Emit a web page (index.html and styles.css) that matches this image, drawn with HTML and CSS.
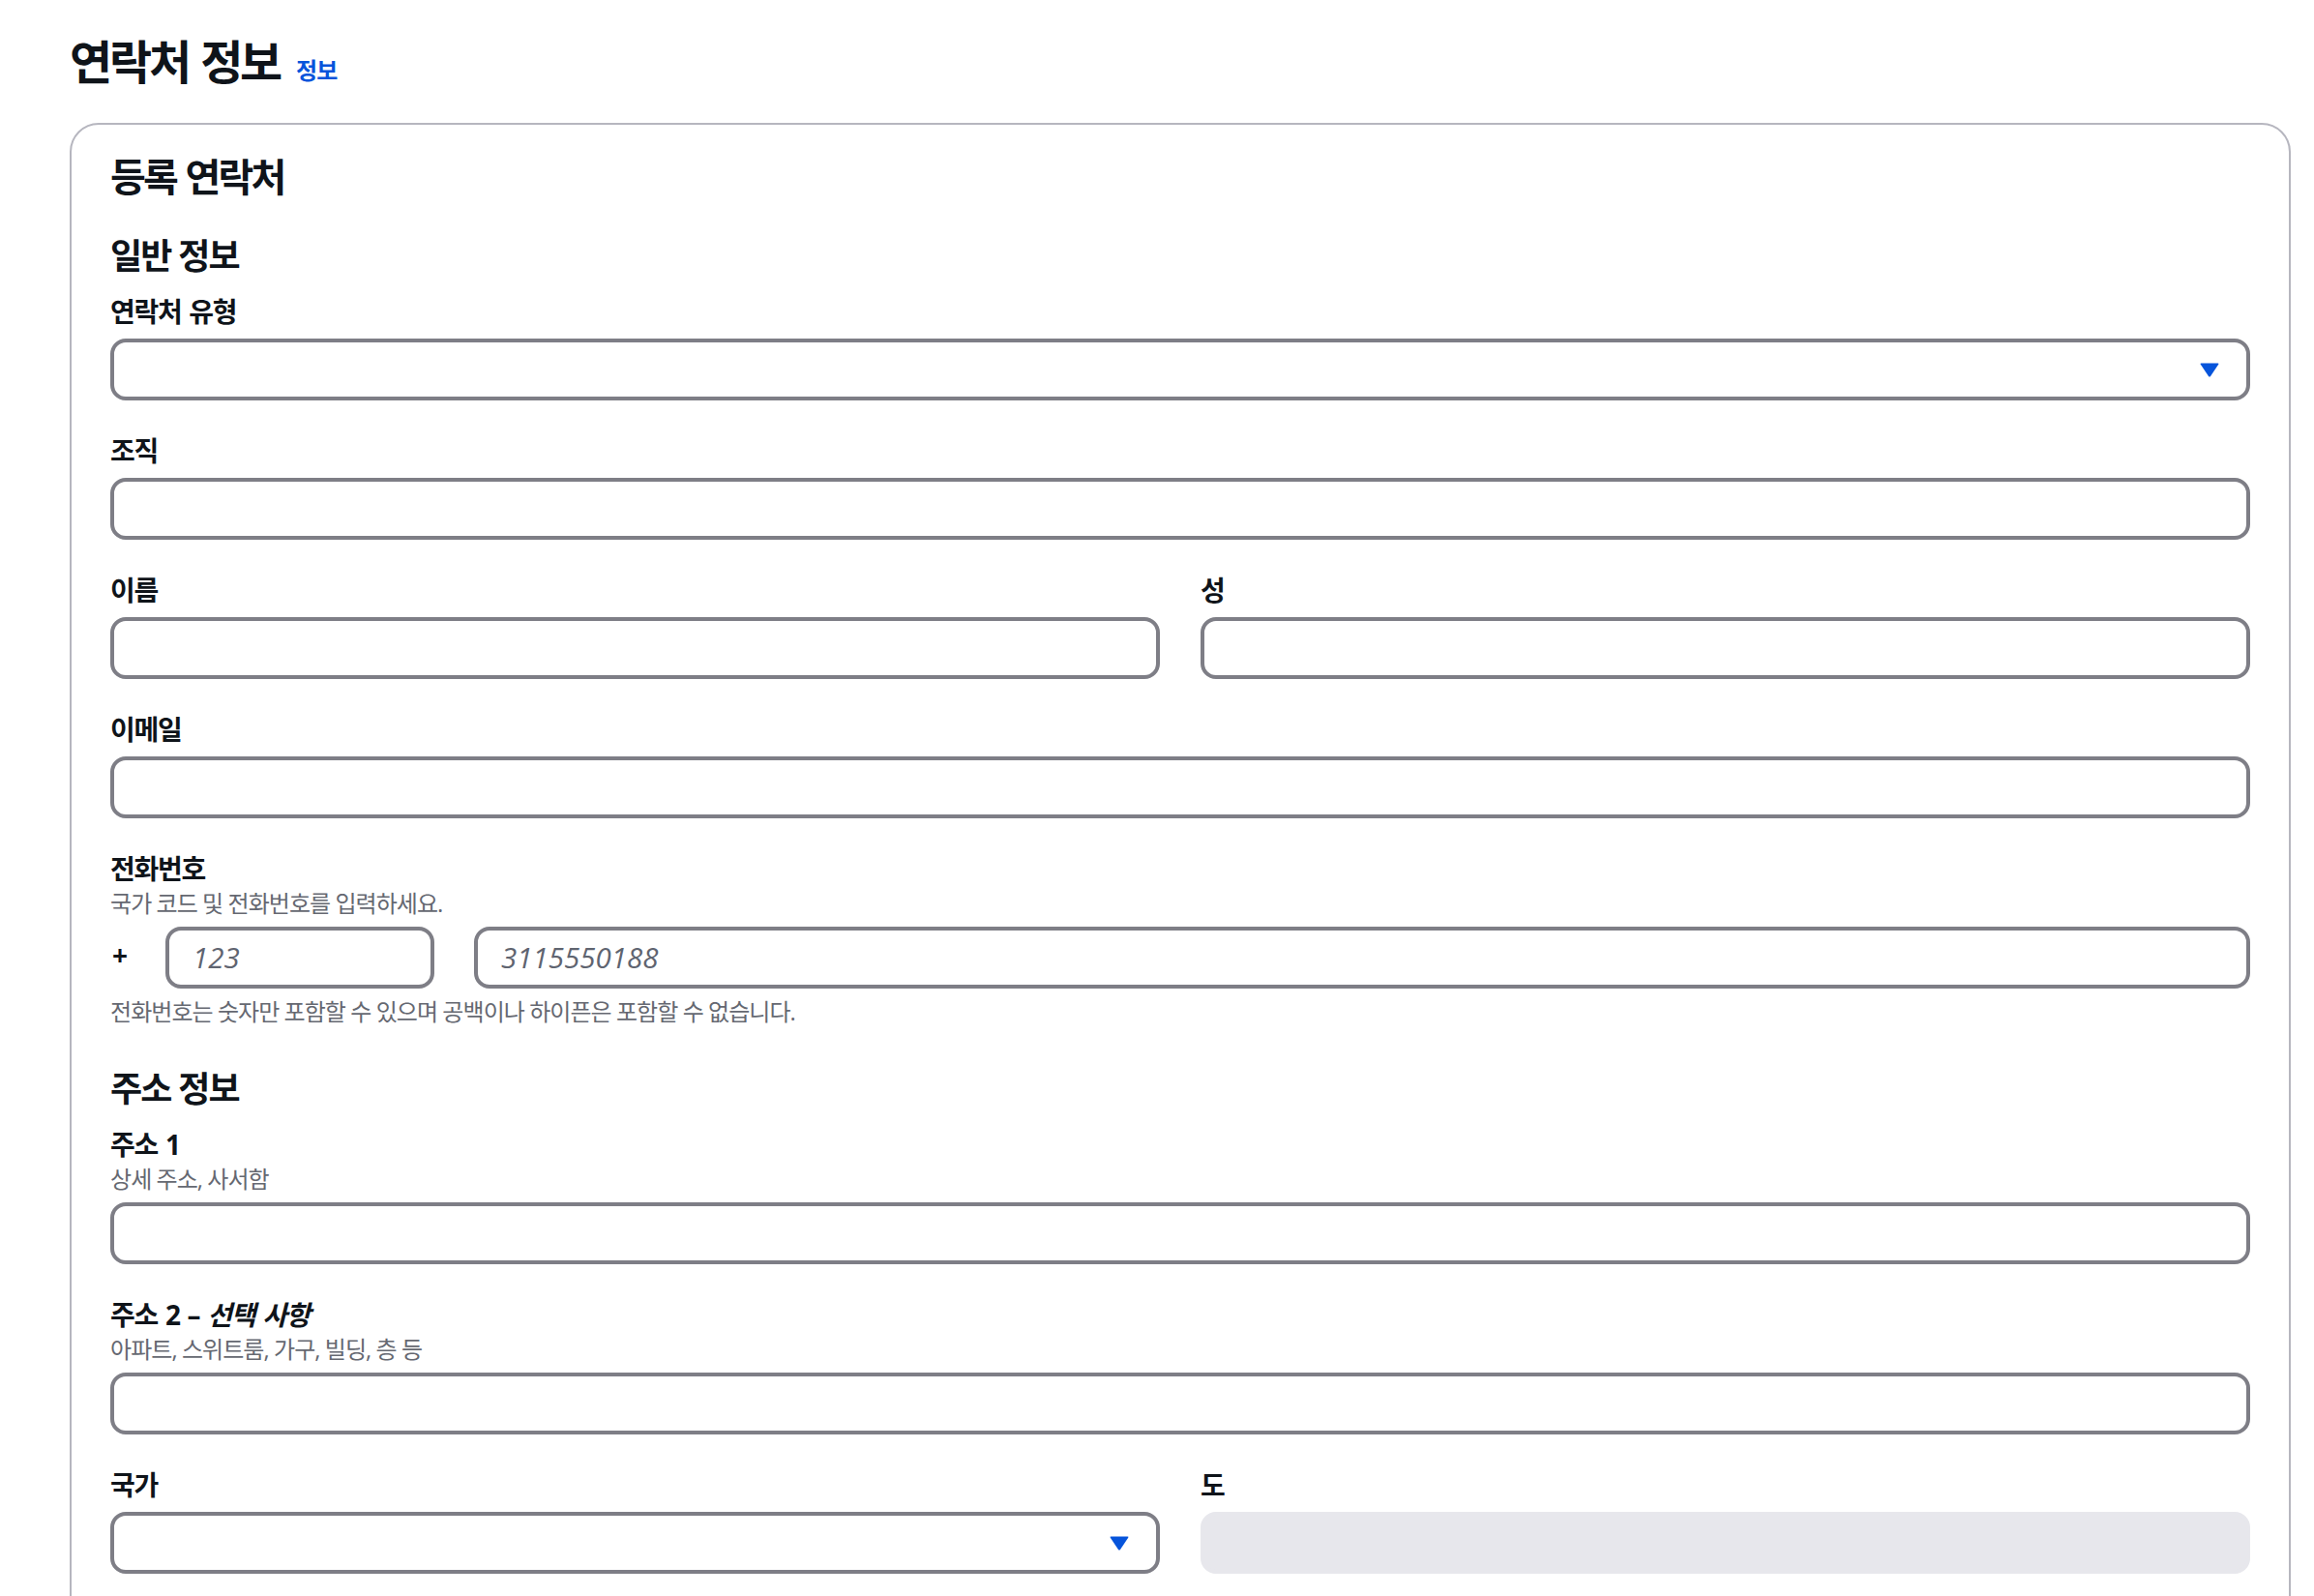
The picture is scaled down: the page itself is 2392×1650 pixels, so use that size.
FILE: index.html
```html
<!DOCTYPE html>
<html lang="ko">
<head>
<meta charset="utf-8">
<title>연락처 정보</title>
<link rel="stylesheet" href="styles.css">
</head>
<body>
<div class="page">
  <div class="page-header">
    <h1 class="page-title">연락처 정보</h1>
    <a class="info-link" href="#">정보</a>
  </div>

  <div class="card">
    <h2 class="card-title">등록 연락처</h2>

    <section class="section">
      <h3 class="section-title">일반 정보</h3>
      <div class="fields">
        <div class="field">
          <div class="label">연락처 유형</div>
          <div class="input select">
            <svg class="caret" width="20" height="15" viewBox="0 0 20 15"><path d="M1.5 0.5 H18.5 Q20 0.5 19.2 1.8 L11 14 Q10 15 9 14 L0.8 1.8 Q0 0.5 1.5 0.5 Z" fill="#0654db"/></svg>
          </div>
        </div>
        <div class="field">
          <div class="label">조직</div>
          <div class="input"></div>
        </div>
        <div class="cols">
          <div class="field">
            <div class="label">이름</div>
            <div class="input"></div>
          </div>
          <div class="field">
            <div class="label">성</div>
            <div class="input"></div>
          </div>
        </div>
        <div class="field">
          <div class="label">이메일</div>
          <div class="input"></div>
        </div>
        <div class="field">
          <div class="label with-desc">전화번호</div>
          <div class="desc">국가 코드 및 전화번호를 입력하세요.</div>
          <div class="phone-row">
            <span class="plus">+</span>
            <div class="input code"><span class="placeholder">123</span></div>
            <div class="input number"><span class="placeholder">3115550188</span></div>
          </div>
          <div class="constraint">전화번호는 숫자만 포함할 수 있으며 공백이나 하이픈은 포함할 수 없습니다.</div>
        </div>
      </div>
    </section>

    <section class="section">
      <h3 class="section-title">주소 정보</h3>
      <div class="fields">
        <div class="field">
          <div class="label with-desc">주소 1</div>
          <div class="desc">상세 주소, 사서함</div>
          <div class="input"></div>
        </div>
        <div class="field">
          <div class="label with-desc">주소 2 – <i>선택 사항</i></div>
          <div class="desc">아파트, 스위트룸, 가구, 빌딩, 층 등</div>
          <div class="input"></div>
        </div>
        <div class="cols">
          <div class="field">
            <div class="label">국가</div>
            <div class="input select">
              <svg class="caret" width="20" height="15" viewBox="0 0 20 15"><path d="M1.5 0.5 H18.5 Q20 0.5 19.2 1.8 L11 14 Q10 15 9 14 L0.8 1.8 Q0 0.5 1.5 0.5 Z" fill="#0654db"/></svg>
            </div>
          </div>
          <div class="field">
            <div class="label">도</div>
            <div class="input disabled"></div>
          </div>
        </div>
      </div>
    </section>
  </div>
</div>
</body>
</html>
```

FILE: styles.css
```css
* { box-sizing: border-box; }

html, body {
  margin: 0;
  padding: 0;
  background: #ffffff;
}

body {
  font-family: "Open Sans", "Noto Sans CJK KR", sans-serif;
  color: #0f141a;
  font-size: 28px;
  line-height: 40px;
}

.page {
  padding: 34px 24px 0 72px;
}

.page-header {
  display: flex;
  align-items: baseline;
  gap: 17px;
}

.page-title {
  margin: 0;
  font-size: 48px;
  line-height: 60px;
  font-weight: 700;
  letter-spacing: -3.2px;
  word-spacing: 3px;
}

.info-link {
  font-size: 24px;
  line-height: 32px;
  font-weight: 700;
  color: #0654db;
  text-decoration: none;
  letter-spacing: -0.8px;
}

.card {
  margin-top: 33px;
  border: 2px solid #b6b6bf;
  border-radius: 30px;
  padding: 30px 40px 120px 40px;
  display: flex;
  flex-direction: column;
  gap: 36px;
}

.card-title {
  margin: 0;
  font-size: 40px;
  line-height: 48px;
  font-weight: 700;
  letter-spacing: -2.8px;
  word-spacing: 2px;
}

.section {
  display: flex;
  flex-direction: column;
  gap: 15px;
}

.section + .section {
  margin-top: 6px;
}

.section-title {
  margin: 0;
  font-size: 36px;
  line-height: 44px;
  font-weight: 700;
  letter-spacing: -1.8px;
}

.fields {
  display: flex;
  flex-direction: column;
  gap: 32px;
}

.cols {
  display: grid;
  grid-template-columns: 1fr 1fr;
  column-gap: 42px;
}

.field {
  display: flex;
  flex-direction: column;
}

.label {
  font-size: 28px;
  line-height: 40px;
  font-weight: 700;
  padding-bottom: 8px;
  letter-spacing: -1.3px;
  word-spacing: 2px;
}

.label.with-desc {
  padding-bottom: 0;
}

.label i {
  font-style: italic;
}

.desc {
  font-size: 24px;
  line-height: 32px;
  color: #656871;
  padding-bottom: 8px;
  letter-spacing: -0.95px;
}

.input {
  height: 64px;
  border: 4px solid #7e7e86;
  border-radius: 16px;
  background: #ffffff;
  display: flex;
  align-items: center;
  padding: 0 24px;
}

.input.select {
  justify-content: flex-end;
  padding-right: 28px;
}

.input.disabled {
  background: #e7e7ec;
  border-color: #e7e7ec;
}

.caret {
  display: block;
}

.placeholder {
  font-style: italic;
  color: #5f6470;
  font-size: 29.5px;
  line-height: 40px;
}

.phone-row {
  display: flex;
  align-items: center;
}

.plus {
  width: 57px;
  font-size: 28px;
  font-weight: 700;
  line-height: 40px;
  padding-left: 2px;
  margin-top: -6px;
}

.input.code {
  width: 278px;
  flex: none;
}

.input.number {
  flex: 1;
  margin-left: 41px;
}

.constraint {
  margin-top: 8px;
  font-size: 24px;
  line-height: 32px;
  color: #656871;
  letter-spacing: -0.95px;
}
```
